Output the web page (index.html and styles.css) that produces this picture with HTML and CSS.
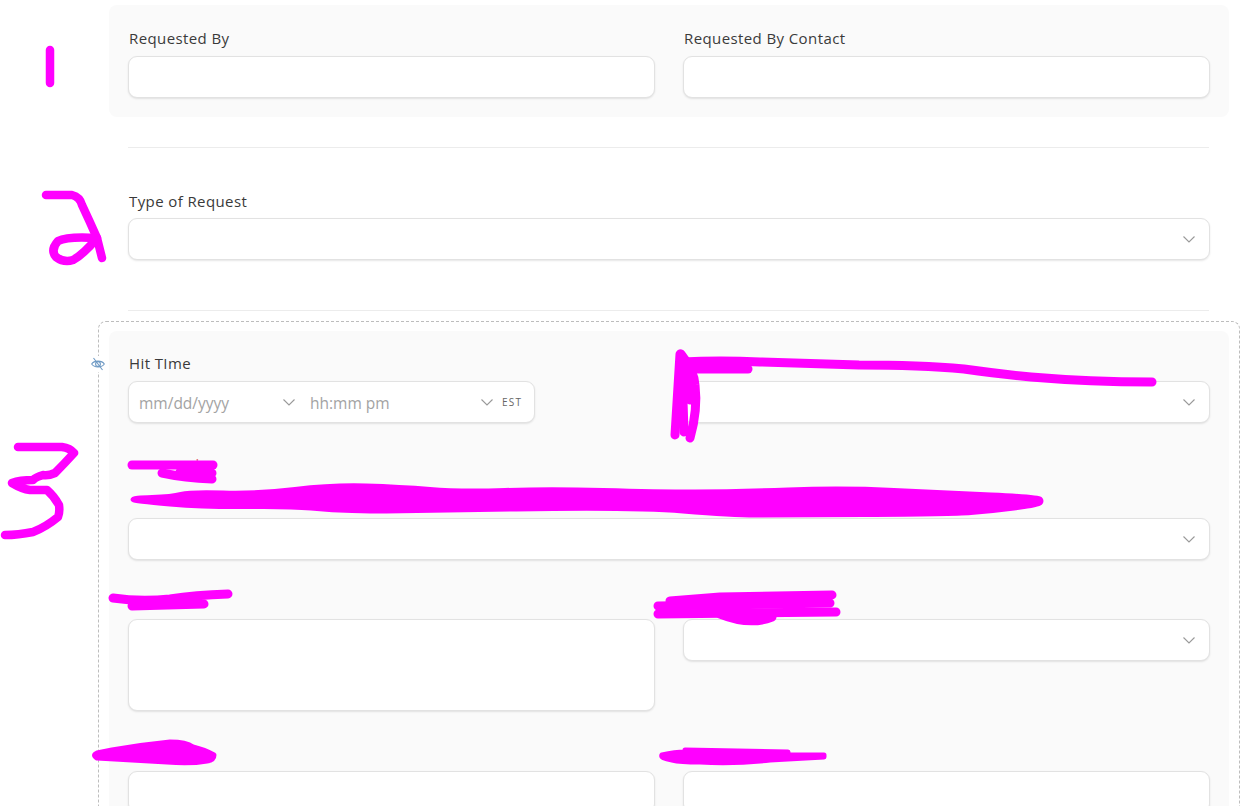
FILE: index.html
```html
<!DOCTYPE html>
<html lang="en">
<head>
<meta charset="utf-8">
<title>Request form</title>
<link rel="stylesheet" href="styles.css">
</head>
<body>
<main class="page">
  <section class="panel panel-top">
    <div class="two-col">
      <div class="field">
        <label class="label">Requested By</label>
        <input class="control" type="text">
      </div>
      <div class="field">
        <label class="label">Requested By Contact</label>
        <input class="control" type="text">
      </div>
    </div>
  </section>

  <hr class="rule">

  <section class="plain-section">
    <label class="label">Type of Request</label>
    <div class="control select">
      <svg class="chevron" viewBox="0 0 12 7"><polyline points="0.5,0.5 6,6 11.5,0.5"/></svg>
    </div>
  </section>

  <hr class="rule rule-last">

  <section class="dashed">
    <svg class="eye-off" viewBox="0 0 14 14">
      <path d="M0.7 7C3 3.2 11 3.2 13.3 7C11 10.8 3 10.8 0.7 7Z"/>
      <circle cx="7" cy="7" r="2.4"/>
      <line x1="2.5" y1="1" x2="11.5" y2="13"/>
    </svg>
    <div class="panel panel-inner">
      <div class="two-col">
        <div class="field">
          <label class="label">Hit TIme</label>
          <div class="control datetime">
            <span class="placeholder date-text">mm/dd/yyyy</span>
            <svg class="chevron" viewBox="0 0 12 7"><polyline points="0.5,0.5 6,6 11.5,0.5"/></svg>
            <span class="placeholder time-text">hh:mm pm</span>
            <svg class="chevron" viewBox="0 0 12 7"><polyline points="0.5,0.5 6,6 11.5,0.5"/></svg>
            <span class="zone">EST</span>
          </div>
        </div>
        <div class="field">
          <label class="label">&nbsp;</label>
          <div class="control select">
            <svg class="chevron" viewBox="0 0 12 7"><polyline points="0.5,0.5 6,6 11.5,0.5"/></svg>
          </div>
        </div>
      </div>

      <div class="field row">
        <label class="label">&nbsp;<span class="required">*</span></label>
        <p class="hint">&nbsp;</p>
        <div class="control select">
          <svg class="chevron" viewBox="0 0 12 7"><polyline points="0.5,0.5 6,6 11.5,0.5"/></svg>
        </div>
      </div>

      <div class="two-col row">
        <div class="field">
          <label class="label">&nbsp;</label>
          <textarea class="control area"></textarea>
        </div>
        <div class="field">
          <label class="label">&nbsp;</label>
          <div class="control select">
            <svg class="chevron" viewBox="0 0 12 7"><polyline points="0.5,0.5 6,6 11.5,0.5"/></svg>
          </div>
        </div>
      </div>

      <div class="two-col row row-last">
        <div class="field">
          <label class="label">&nbsp;</label>
          <input class="control" type="text">
        </div>
        <div class="field">
          <label class="label">&nbsp;</label>
          <input class="control" type="text">
        </div>
      </div>
    </div>
  </section>
</main>

<svg class="ink" viewBox="0 0 1253 806" aria-hidden="true">
  <g class="ink-line thick">
    <path d="M50 50V83"/>
    <path d="M46 195H72Q80 197 82 205Q90 222 97 238L102 258"/>
    <path d="M97 238Q68 236 58 241Q50 250 56 257Q64 263 73 260Q84 254 97 238Z"/>
    <path d="M18 447H62Q70 448 74 453Q64 464 55 473Q48 476 43 475Q36 477 33 480Q20 480 12 483Q22 489 30 490H47Q54 496 59 505Q60 512 58 517Q46 527 33 532Q18 535 5 535"/>
  </g>
  <g class="ink-line">
    <path d="M682 362Q720 360 760 362L859 365Q920 365 964 369Q1000 374 1031 377Q1090 382 1152 382"/>
    <path d="M688 369H748"/>
    <path d="M680 354L675 435"/>
    <path d="M681 354Q694 370 695 385Q698 410 690 438"/>
    <path d="M682 370L684 432"/>
    <path d="M684 365L690 400"/>
    <path d="M132 465H213"/>
    <path d="M162 473Q185 478 212 479"/>
    <path d="M180 472L212 473"/>
    <path d="M113 598Q140 602 170 599Q195 595 228 594"/>
    <path d="M132 606L204 604"/>
    <path d="M670 601L720 597L832 595"/>
    <path d="M658 606L830 603"/>
    <path d="M658 614L836 612"/>
    <path d="M720 614Q750 626 772 617"/>
  </g>
  <g class="ink-fill">
    <path d="M152 497.5Q172 497 181 494.5Q190 492 223 493Q257 494 295 489.5Q333 485 366 486Q400 487 430 489.5Q460 492 505 490.5Q550 489 603 490.5Q657 492 695 492Q733 492 788 490Q843 488 894 490.5Q945 493 991 495Q1038 497 1040 499Q1042 501 1040 503Q1038 505 1014 508Q991 511 971 512.5Q952 514 864 514.5Q777 515 755 515Q733 515 683 511Q633 507 516 509Q400 511 386 511Q372 511 352 510.5Q333 510 311 508Q290 506 248 506.5Q207 507 170 504Q133 501 133 499.5Q133 498 152 497.5Z"/>
    <path d="M112 750Q140 745 170 742Q186 742 193 747Q205 750 214 755Q214 760 207 761Q190 764 167 762Q130 760 97 758Q92 755 97 753Z"/>
    <path d="M662 755Q675 752 685 752V750L788 752V755L824 755V757L770 760Q734 764 700 762Q680 762 672 760Q660 758 662 755Z"/>
  </g>
</svg>
</body>
</html>
```

FILE: styles.css
```css
html, body {
  margin: 0;
  height: 806px;
  overflow: hidden;
  background: #fff;
}

body {
  position: relative;
  font-family: "Open Sans", "Noto Sans", sans-serif;
  color: #333;
}

.page {
  width: 1142px;
  margin-left: 98px;
  padding-top: 5px;
}

.panel {
  background: #fafafa;
  border-radius: 8px;
}

.panel-top {
  margin: 0 11px;
  padding: 23px 19px 19px;
}

.two-col {
  display: grid;
  grid-template-columns: 527px 527px;
  gap: 28px;
}

.field {
  display: flex;
  flex-direction: column;
  min-width: 0;
}

.label {
  display: block;
  height: 20px;
  margin: 0 0 8px 1px;
  font-size: 15px;
  font-weight: 500;
  letter-spacing: 0.4px;
  line-height: 20px;
  color: #3a3a3a;
}

.required {
  color: #e4606d;
  margin-left: 60px;
}

.hint {
  height: 20px;
  margin: 5px 0 11px;
  font-size: 13px;
  line-height: 20px;
}

.control {
  display: flex;
  align-items: center;
  box-sizing: border-box;
  width: 100%;
  height: 42px;
  margin: 0;
  padding: 0 14px;
  background: #fff;
  border: 1px solid #e2e2e2;
  border-radius: 9px;
  box-shadow: 0 1px 2px rgba(0, 0, 0, 0.1);
  outline: none;
  resize: none;
  font: inherit;
}

.select {
  justify-content: flex-end;
}

.area {
  display: block;
  height: 92px;
}

.chevron {
  flex: none;
  width: 12px;
  height: 7px;
  fill: none;
  stroke: #999;
  stroke-width: 1.1;
}

.rule {
  height: 1px;
  margin: 30px 31px 0 30px;
  border: 0;
  background: #ececec;
}

.rule-last {
  margin-top: 50px;
}

.plain-section {
  margin: 43px 30px 0;
}

.plain-section .label {
  margin-bottom: 7px;
}

.dashed {
  position: relative;
  margin-top: 10px;
  padding: 9px 10px 0;
  border: 1px dashed #bdbdbd;
  border-bottom: 0;
  border-radius: 8px 8px 0 0;
}

.eye-off {
  position: absolute;
  top: 34px;
  left: -8px;
  width: 14px;
  height: 14px;
  padding: 1px 0;
  background: #fff;
  fill: none;
  stroke: #6f9ac4;
  stroke-width: 1.1;
}

.panel-inner {
  padding: 22px 19px 40px;
}

.row {
  margin-top: 31px;
}

.row-last {
  margin-top: 32px;
}

.datetime {
  width: 407px;
  padding: 0 11px 0 10px;
}

.placeholder {
  padding-top: 2px;
  font-size: 15.5px;
  color: #a3a3a3;
}

.date-text {
  width: 144px;
}

.time-text {
  width: 171px;
  margin-left: 15px;
}

.zone {
  margin-left: 9px;
  font-size: 10px;
  letter-spacing: 1.2px;
  color: #666;
}

.ink {
  position: absolute;
  top: 0;
  left: 0;
  width: 1253px;
  height: 806px;
  pointer-events: none;
}

.ink-line path {
  fill: none;
  stroke: #ff00ff;
  stroke-width: 9;
  stroke-linecap: round;
  stroke-linejoin: round;
}

.ink-line.thick path {
  stroke-width: 8.5;
}

.ink-fill path {
  fill: #ff00ff;
  stroke: #ff00ff;
  stroke-width: 5;
  stroke-linejoin: round;
}
```
